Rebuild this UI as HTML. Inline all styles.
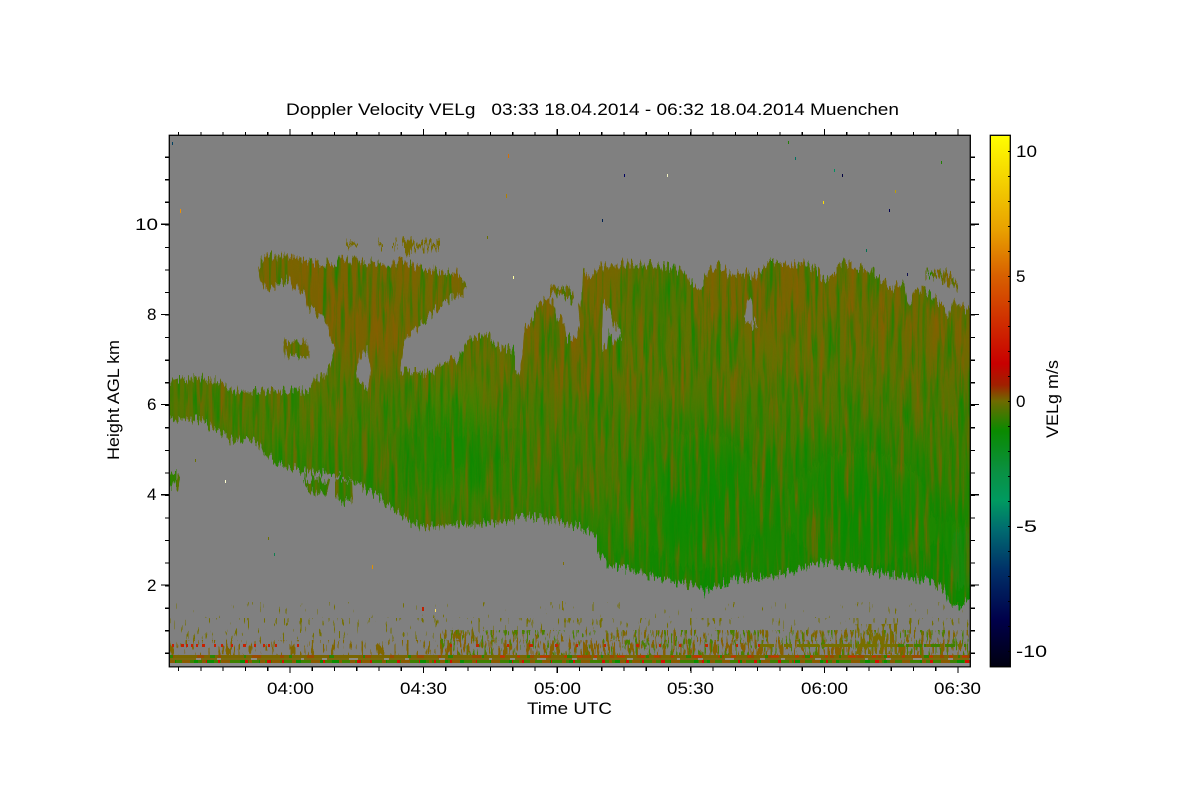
<!DOCTYPE html>
<html><head><meta charset="utf-8"><title>Doppler Velocity</title>
<style>html,body{margin:0;padding:0;background:#fff}svg{display:block}text{font-family:"Liberation Sans",sans-serif;fill:#000;white-space:pre}</style>
</head><body>
<svg xmlns="http://www.w3.org/2000/svg" width="1200" height="800" viewBox="0 0 1200 800">
<defs>
<clipPath id="plot"><rect x="170" y="136" width="800" height="530"/></clipPath>
<clipPath id="cloud"><path clip-rule="evenodd" d="M160,381 L170,381 L200,378 L214,380 L232,390 L262,392 L310,390 L314,378 L325,376 L331,366 L335,347 L330,332 L323,317 L313,310 L307,307 L305,291 L293,288 L289,278 L273,288 L260,284 L258,268 L264,255 L295,257 L307,263 L330,263 L343,260 L383,263 L400,262 L410,265 L425,268 L443,273 L457,273 L463,282 L467,292 L450,299 L443,303 L433,312 L427,320 L415,330 L407,333 L403,347 L400,372 L430,373 L437,368 L447,365 L450,360 L455,362 L460,353 L467,343 L482,333 L490,337 L497,347 L507,348 L515,350 L515,370 L520,373 L523,350 L524,330 L532,320 L537,305 L550,298 L555,307 L557,317 L565,323 L566,338 L577,338 L580,320 L578,307 L582,297 L583,273 L592,277 L600,267 L623,263 L640,263 L667,267 L683,272 L693,282 L700,287 L707,273 L718,265 L725,268 L728,275 L747,273 L755,277 L762,270 L767,263 L800,263 L808,265 L817,270 L825,282 L835,272 L843,263 L857,267 L873,272 L885,282 L890,290 L898,285 L905,285 L907,305 L917,290 L928,292 L940,303 L948,317 L953,300 L967,310 L985,315 L985,600 L968,600 L960,607 L950,607 L945,590 L930,580 L900,577 L880,573 L850,568 L820,562 L800,570 L770,578 L740,578 L715,585 L705,593 L690,585 L660,578 L630,570 L610,567 L597,553 L597,535 L580,527 L550,520 L530,517 L500,522 L470,525 L445,525 L425,528 L410,522 L395,510 L380,498 L368,492 L355,480 L330,474 L305,472 L285,465 L265,455 L260,445 L245,438 L230,440 L215,430 L200,420 L160,418 Z
M360,355 L368,350 L371,372 L368,388 L358,380 L356,370 Z
M603,303 L610,307 L613,323 L620,330 L622,338 L613,340 L608,333 L607,350 L602,347 L602,327 Z
M747,300 L752,300 L753,317 L758,328 L752,325 L744,318 Z
M283,342 L305,343 L310,350 L308,357 L295,356 L285,354 Z
M165,473 L180,475 L178,486 L165,486 Z
M303,478 L330,480 L328,494 L310,492 Z
M335,478 L352,480 L353,500 L340,502 L335,495 Z
M550,283 L563,287 L573,290 L574,303 L560,293 L550,292 Z
M925,271 L948,273 L958,285 L958,292 L950,283 L935,276 L925,276 Z"/></clipPath>
<clipPath id="topstrip"><path d="M346,241h12v4h-12z M378,243h5v3h-5z M392,243h6v3h-6z M402,241h10v13h-7v-6h-3z M412,243h28v5h-28z"/></clipPath>
<linearGradient id="vert" gradientUnits="userSpaceOnUse" x1="0" y1="260" x2="0" y2="600">
<stop offset="0" stop-color="#7a6400"/><stop offset=".25" stop-color="#657000"/><stop offset=".55" stop-color="#3f7c00"/><stop offset=".8" stop-color="#228400"/><stop offset="1" stop-color="#128800"/>
</linearGradient>
<linearGradient id="cbar" gradientUnits="userSpaceOnUse" x1="0" y1="135" x2="0" y2="667">
<stop offset="0" stop-color="#ffff00"/>
<stop offset=".179" stop-color="#e8a000"/>
<stop offset=".265" stop-color="#d86000"/>
<stop offset=".43" stop-color="#c80000"/>
<stop offset=".47" stop-color="#a02000"/>
<stop offset=".5" stop-color="#6f6a00"/>
<stop offset=".556" stop-color="#0a8a00"/>
<stop offset=".63" stop-color="#0a9040"/>
<stop offset=".687" stop-color="#009a60"/>
<stop offset=".743" stop-color="#006a70"/>
<stop offset=".818" stop-color="#003068"/>
<stop offset=".912" stop-color="#00004a"/>
<stop offset="1" stop-color="#000010"/>
</linearGradient>
<filter id="jag" filterUnits="userSpaceOnUse" x="150" y="125" width="840" height="552" color-interpolation-filters="sRGB">
<feTurbulence type="fractalNoise" baseFrequency="0.48 0.04" numOctaves="2" seed="7"/>
<feColorMatrix result="n" values="0 0 0 0 .5 0 2.4 0 0 -.7 0 0 1 0 0 0 0 0 0 1"/>
<feDisplacementMap in="SourceGraphic" in2="n" scale="11" xChannelSelector="R" yChannelSelector="G"/>
</filter>
<filter id="blur" filterUnits="userSpaceOnUse" x="100" y="100" width="1000" height="620"><feGaussianBlur stdDeviation="24"/></filter>
<filter id="sbrown" filterUnits="userSpaceOnUse" x="160" y="130" width="830" height="540" color-interpolation-filters="sRGB">
<feTurbulence type="fractalNoise" baseFrequency="0.2 0.014" numOctaves="3" seed="3"/>
<feColorMatrix values="0 0 0 0 .55 0 0 0 0 .36 0 0 0 0 0 2 0 0 0 -.9"/>
</filter>
<filter id="sgreen" filterUnits="userSpaceOnUse" x="160" y="130" width="830" height="540" color-interpolation-filters="sRGB">
<feTurbulence type="fractalNoise" baseFrequency="0.22 0.016" numOctaves="3" seed="11"/>
<feColorMatrix values="0 0 0 0 .02 0 0 0 0 .54 0 0 0 0 0 2 0 0 0 -.9"/>
</filter>
<filter id="sp1" filterUnits="userSpaceOnUse" x="165" y="600" width="810" height="70" color-interpolation-filters="sRGB">
<feTurbulence type="fractalNoise" baseFrequency="0.42 0.07" numOctaves="2" seed="5"/>
<feColorMatrix values="0 0 0 0 .53 0 0 0 0 .38 0 0 0 0 0 30 0 0 0 -16.2"/>
</filter>
<filter id="sp2" filterUnits="userSpaceOnUse" x="165" y="600" width="810" height="70" color-interpolation-filters="sRGB">
<feTurbulence type="fractalNoise" baseFrequency="0.42 0.07" numOctaves="2" seed="5"/>
<feColorMatrix values="0 0 0 0 .5 0 0 0 0 .4 0 0 0 0 0 30 0 0 0 -18"/>
</filter>
<filter id="sp3" filterUnits="userSpaceOnUse" x="165" y="600" width="810" height="70" color-interpolation-filters="sRGB">
<feTurbulence type="fractalNoise" baseFrequency="0.42 0.07" numOctaves="2" seed="5"/>
<feColorMatrix values="0 0 0 0 .46 0 0 0 0 .44 0 0 0 0 0 30 0 0 0 -20.4"/>
</filter>
<filter id="sp6" filterUnits="userSpaceOnUse" x="165" y="600" width="810" height="70" color-interpolation-filters="sRGB">
<feTurbulence type="fractalNoise" baseFrequency="0.42 0.07" numOctaves="2" seed="9"/>
<feColorMatrix values="0 0 0 0 .46 0 0 0 0 .44 0 0 0 0 0 30 0 0 0 -22.2"/>
</filter>
<filter id="sp4" filterUnits="userSpaceOnUse" x="165" y="600" width="810" height="70" color-interpolation-filters="sRGB">
<feTurbulence type="fractalNoise" baseFrequency="0.4 0.06" numOctaves="2" seed="21"/>
<feColorMatrix values="0 0 0 0 .48 0 0 0 0 .43 0 0 0 0 0 30 0 0 0 -15"/>
</filter>
<filter id="sp5" filterUnits="userSpaceOnUse" x="165" y="600" width="810" height="70" color-interpolation-filters="sRGB">
<feTurbulence type="fractalNoise" baseFrequency="0.45 0.08" numOctaves="2" seed="33"/>
<feColorMatrix values="0 0 0 0 .3 0 0 0 0 .5 0 0 0 0 0 30 0 0 0 -18.6"/>
</filter>
</defs>

<rect width="1200" height="800" fill="#fff"/>
<rect x="170" y="136" width="800" height="530" fill="#808080"/>

<g clip-path="url(#plot)">
<g filter="url(#jag)">
<g clip-path="url(#cloud)">
<rect x="150" y="130" width="840" height="540" fill="url(#vert)"/>
<g filter="url(#blur)">
<ellipse cx="320" cy="300" rx="70" ry="30" fill="#7c6000"/>
<ellipse cx="370" cy="330" rx="35" ry="40" fill="#7c6000"/>
<ellipse cx="240" cy="395" rx="90" ry="14" fill="#6a6c00"/>
<ellipse cx="450" cy="375" rx="60" ry="12" fill="#7a6400"/>
<ellipse cx="480" cy="520" rx="80" ry="10" fill="#6a6c00"/>
<ellipse cx="570" cy="350" rx="30" ry="40" fill="#7c6000"/>
<ellipse cx="455" cy="440" rx="36" ry="55" fill="#0a8c00"/>
<ellipse cx="270" cy="425" rx="60" ry="14" fill="#3c8000"/>
<ellipse cx="660" cy="300" rx="24" ry="36" fill="#2a8000"/>
<ellipse cx="760" cy="300" rx="50" ry="24" fill="#7c6000"/>
<ellipse cx="890" cy="320" rx="60" ry="28" fill="#6a6a00"/>
<ellipse cx="960" cy="350" rx="18" ry="40" fill="#7c6000"/>
<ellipse cx="700" cy="500" rx="60" ry="70" fill="#0e8a00"/>
<ellipse cx="860" cy="510" rx="70" ry="60" fill="#0c8a00"/>
<ellipse cx="965" cy="560" rx="20" ry="50" fill="#088c10"/>
<ellipse cx="600" cy="470" rx="30" ry="50" fill="#4a7800"/>
</g>
<rect x="150" y="130" width="840" height="540" filter="url(#sbrown)"/>
<rect x="150" y="130" width="840" height="540" filter="url(#sgreen)"/>
</g>
<g clip-path="url(#topstrip)"><rect x="340" y="238" width="105" height="20" fill="#766a00"/></g>
</g>

<!-- low level speckle -->
<svg x="170" y="640" width="800" height="16" viewBox="170 640 800 16"><rect x="165" y="600" width="810" height="70" filter="url(#sp2)"/></svg>
<svg x="440" y="640" width="530" height="16" viewBox="440 640 530 16"><rect x="165" y="600" width="810" height="70" filter="url(#sp1)"/></svg>
<svg x="440" y="630" width="530" height="10" viewBox="440 630 530 10"><rect x="165" y="600" width="810" height="70" filter="url(#sp2)"/></svg>
<svg x="170" y="630" width="270" height="10" viewBox="170 630 270 10"><rect x="165" y="600" width="810" height="70" filter="url(#sp3)"/></svg>
<svg x="170" y="618" width="800" height="12" viewBox="170 618 800 12"><rect x="165" y="600" width="810" height="70" filter="url(#sp3)"/></svg>
<svg x="170" y="602" width="800" height="16" viewBox="170 602 800 16"><rect x="165" y="600" width="810" height="70" filter="url(#sp6)"/></svg>
<svg x="440" y="630" width="530" height="26" viewBox="440 630 530 26"><rect x="165" y="600" width="810" height="70" filter="url(#sp5)"/></svg>
<svg x="855" y="624" width="42" height="30" viewBox="855 624 42 30"><rect x="165" y="600" width="810" height="70" filter="url(#sp4)"/></svg>

<!-- dotted row at about 645 m -->
<line x1="172" y1="645.5" x2="300" y2="645.5" stroke="#c82000" stroke-width="3" stroke-dasharray="2 7 3 2 2 3 2 3 2 4 3 9 2 5 2 8 2 10 3 8 2 7 2 3 2 5 2 20"/>
<line x1="450" y1="645.5" x2="760" y2="645.5" stroke="#c02800" stroke-width="3" stroke-dasharray="2 24 3 28 2 20 4 22 3 18 2 26 2 30 3 20 2 18"/>
<line x1="760" y1="645.5" x2="895" y2="645.5" stroke="#767000" stroke-width="3" stroke-dasharray="14 10 8 5 22 3 30 5 20 4"/>
<line x1="895" y1="645.5" x2="970" y2="645.5" stroke="#3f8000" stroke-width="3" stroke-dasharray="9 2 5 3 8 2 4 2 12 3 10"/>
<line x1="895" y1="645.5" x2="970" y2="645.5" stroke="#7a6a00" stroke-width="3" stroke-dasharray="3 11 4 13 5 9 3 15"/>

<!-- lowest bands -->
<rect x="170" y="655" width="800" height="3" fill="#7a6600"/>
<rect x="170" y="658" width="800" height="2" fill="#8e8c80"/>
<line x1="170" y1="659" x2="970" y2="659" stroke="#7a6a10" stroke-width="2" stroke-dasharray="26 5 16 4 30 6 44 3 18 5 22 9"/>
<rect x="170" y="660" width="800" height="3" fill="#3f8000"/>
<rect x="170" y="663" width="800" height="3" fill="#8c8c8c"/>
<line x1="170" y1="661.5" x2="970" y2="661.5" stroke="#d01000" stroke-width="3" stroke-dasharray="3 13 2 17 4 9 2 25 3 19 4 11 2 14 3 21"/>
<line x1="170" y1="661.5" x2="970" y2="661.5" stroke="#0a8c00" stroke-width="3" stroke-dasharray="6 18 4 9 7 26 5 14 3 33"/>
<line x1="170" y1="661.5" x2="970" y2="661.5" stroke="#8a5a00" stroke-width="3" stroke-dasharray="5 7 8 12 4 15 9 19 3 8"/>
<line x1="170" y1="656.5" x2="970" y2="656.5" stroke="#9a4a00" stroke-width="3" stroke-dasharray="4 23 7 14 3 31 9 19"/>
<line x1="500" y1="656.5" x2="970" y2="656.5" stroke="#c83000" stroke-width="2" stroke-dasharray="5 12 3 20 8 16 4 9"/>
<line x1="170" y1="656.5" x2="970" y2="656.5" stroke="#2e8400" stroke-width="3" stroke-dasharray="3 37 5 29 2 43"/>

<!-- isolated specks -->
<g shape-rendering="crispEdges">
<rect x="172" y="142" width="1" height="3" fill="#004060"/>
<rect x="180" y="209" width="1" height="4" fill="#f09000"/>
<rect x="508" y="154" width="1" height="4" fill="#d87000"/>
<rect x="506" y="194" width="1" height="4" fill="#b08000"/>
<rect x="487" y="236" width="1" height="3" fill="#6a7000"/>
<rect x="513" y="276" width="1" height="3" fill="#ffffa0"/>
<rect x="624" y="174" width="1" height="3" fill="#000060"/>
<rect x="667" y="174" width="1" height="3" fill="#f0f0c0"/>
<rect x="602" y="219" width="1" height="3" fill="#002050"/>
<rect x="788" y="141" width="1" height="3" fill="#208000"/>
<rect x="795" y="157" width="1" height="3" fill="#007060"/>
<rect x="834" y="169" width="1" height="3" fill="#009060"/>
<rect x="842" y="174" width="1" height="3" fill="#000040"/>
<rect x="823" y="201" width="1" height="3" fill="#ffe000"/>
<rect x="889" y="209" width="1" height="3" fill="#000050"/>
<rect x="895" y="190" width="1" height="3" fill="#c0a000"/>
<rect x="941" y="161" width="1" height="3" fill="#208000"/>
<rect x="866" y="249" width="1" height="3" fill="#007050"/>
<rect x="907" y="273" width="1" height="3" fill="#101050"/>
<rect x="225" y="480" width="1" height="3" fill="#ffffd0"/>
<rect x="195" y="459" width="1" height="3" fill="#6a7000"/>
<rect x="274" y="553" width="1" height="3" fill="#108050"/>
<rect x="372" y="565" width="1" height="4" fill="#e09000"/>
<rect x="268" y="537" width="1" height="3" fill="#6a7000"/>
<rect x="422" y="607" width="2" height="4" fill="#c02000"/>
<rect x="435" y="609" width="1" height="3" fill="#ffe060"/>
<rect x="563" y="562" width="1" height="3" fill="#807000"/>
<rect x="562" y="601" width="1" height="9" fill="#807000"/>
</g>
</g>

<!-- plot frame and ticks -->
<rect x="169.3" y="135.3" width="801" height="531.5" fill="none" stroke="#000" stroke-width="1.3"/>
<g stroke="#000" fill="none" shape-rendering="crispEdges">
<line x1="178" y1="133.5" x2="970" y2="133.5" stroke-width="3" stroke-dasharray="1.2 21.07"/>
<line x1="289.4" y1="132" x2="970" y2="132" stroke-width="6" stroke-dasharray="1.2 132.42"/>
<line x1="178" y1="669" x2="970" y2="669" stroke-width="4" stroke-dasharray="1.2 21.07"/>
<line x1="289.4" y1="670" x2="970" y2="670" stroke-width="6" stroke-dasharray="1.2 132.42"/>
<line x1="167" y1="156.6" x2="167" y2="667" stroke-width="4" stroke-dasharray="1.2 21.35"/>
<line x1="165" y1="223.6" x2="165" y2="600" stroke-width="8" stroke-dasharray="1.2 89"/>
<line x1="973" y1="156.6" x2="973" y2="667" stroke-width="4" stroke-dasharray="1.2 21.35"/>
<line x1="975" y1="223.6" x2="975" y2="600" stroke-width="8" stroke-dasharray="1.2 89"/>
</g>

<!-- colour bar -->
<rect x="990" y="135" width="20.6" height="532" fill="url(#cbar)"/>
<rect x="990.3" y="135.3" width="20" height="531.5" fill="none" stroke="#000" stroke-width="1.3"/>
<line x1="1009" y1="151" x2="1009" y2="660" stroke="#000" stroke-width="2" stroke-dasharray="1.2 23.8" shape-rendering="crispEdges"/>

<!-- text -->
<text x="286" y="115" font-size="17" textLength="613" lengthAdjust="spacingAndGlyphs" xml:space="preserve">Doppler Velocity VELg   03:33 18.04.2014 - 06:32 18.04.2014 Muenchen</text>
<g font-size="17" lengthAdjust="spacingAndGlyphs">
<text x="267" y="694" textLength="47" lengthAdjust="spacingAndGlyphs">04:00</text>
<text x="400" y="694" textLength="47" lengthAdjust="spacingAndGlyphs">04:30</text>
<text x="534" y="694" textLength="47" lengthAdjust="spacingAndGlyphs">05:00</text>
<text x="667" y="694" textLength="47" lengthAdjust="spacingAndGlyphs">05:30</text>
<text x="801" y="694" textLength="47" lengthAdjust="spacingAndGlyphs">06:00</text>
<text x="934" y="694" textLength="47" lengthAdjust="spacingAndGlyphs">06:30</text>
<text x="527" y="714" textLength="85" lengthAdjust="spacingAndGlyphs">Time UTC</text>
<text x="135" y="230" textLength="23" lengthAdjust="spacingAndGlyphs">10</text>
<text x="147" y="320">8</text>
<text x="147" y="410">6</text>
<text x="147" y="500">4</text>
<text x="147" y="591">2</text>
<text x="1016" y="157" textLength="21" lengthAdjust="spacingAndGlyphs">10</text>
<text x="1016" y="282">5</text>
<text x="1016" y="407">0</text>
<text x="1016" y="532" textLength="21" lengthAdjust="spacingAndGlyphs">-5</text>
<text x="1016" y="657" textLength="31" lengthAdjust="spacingAndGlyphs">-10</text>
<text transform="translate(119,460) rotate(-90)" textLength="120" lengthAdjust="spacingAndGlyphs">Height AGL km</text>
<text transform="translate(1058,438) rotate(-90)" textLength="78" lengthAdjust="spacingAndGlyphs">VELg m/s</text>
</g>
</svg>
</body></html>
